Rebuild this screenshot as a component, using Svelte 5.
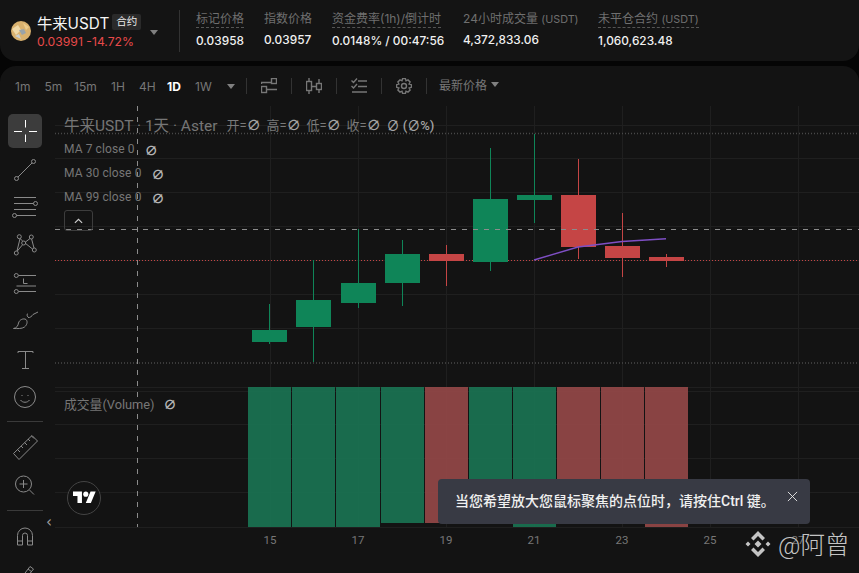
<script>
    const intervals = ['1m', '5m', '15m', '1H', '4H', '1D', '1W']
    const stats = [
        { label: '标记价格', value: '0.03958', dashed: true, left: 0 },
        { label: '指数价格', value: '0.03957', left: 68 },
        { label: '资金费率(1h)/倒计时', value: '0.0148% / 00:47:56', dashed: true, left: 136 },
        { label: '24小时成交量', unit: '(USDT)', value: '4,372,833.06', left: 267 },
        { label: '未平仓合约', unit: '(USDT)', value: '1,060,623.48', dashed: true, left: 402 }
    ]
    const candles = [
        { x: 252, top: 330, bottom: 342, hi: 304, lo: 344, up: true, volEnd: 291, volStart: 248, volBottom: 527 },
        { x: 296, top: 300, bottom: 327, hi: 260, lo: 362, up: true, volStart: 292, volEnd: 335, volBottom: 527 },
        { x: 341, top: 283, bottom: 303, hi: 229, lo: 308, up: true, volStart: 336, volEnd: 380, volBottom: 527 },
        { x: 385, top: 254, bottom: 283, hi: 240, lo: 306, up: true, volStart: 381, volEnd: 424, volBottom: 523 },
        { x: 429, top: 254, bottom: 261, hi: 245, lo: 286, up: false, volStart: 425, volEnd: 468, volBottom: 523 },
        { x: 473, top: 199, bottom: 262, hi: 148, lo: 271, up: true, volStart: 469, volEnd: 512, volBottom: 520 },
        { x: 517, top: 195, bottom: 200, hi: 134, lo: 223, up: true, volStart: 513, volEnd: 556, volBottom: 527 },
        { x: 561, top: 195, bottom: 247, hi: 159, lo: 259, up: false, volStart: 557, volEnd: 600, volBottom: 520 },
        { x: 605, top: 246, bottom: 258, hi: 213, lo: 277, up: false, volStart: 601, volEnd: 644, volBottom: 520 },
        { x: 649, top: 257, bottom: 261, hi: 254, lo: 267, up: false, volStart: 645, volEnd: 688, volBottom: 527 }
    ]
    const gridX = [270, 358, 446, 534, 622, 710, 798]
    const gridY = [125, 158, 192, 226, 260, 294, 328, 387, 391, 424, 458, 492, 527]
    const days = ['15', '17', '19', '21', '23', '25', '27']
    const ohlc = ['开', '高', '低', '收']
    const maRows = [
        { name: 'MA 7 close 0' },
        { name: 'MA 30 close 0' },
        { name: 'MA 99 close 0' }
    ]
    const tbIcons = ['line', 'lines', 'pattern', 'fib', 'brush', 'text', 'smile']
</script>

<div class="page">
    <header class="topbar">
        <div class="symbol">
            <svg class="coin" viewBox="0 0 20 20">
                <circle cx="10" cy="10" r="10" fill="#d9b16e" />
                <path d="M1 8 L7 4 L10 9 L5 14 Z" fill="#f0d9a8" />
                <path d="M8 9 L13 8 L15 12 L11 14 Z" fill="#9aa3a8" />
                <path d="M12 2 L18 6 L15 9 Z" fill="#eccb8c" />
                <path d="M4 15 L8 13 L10 18 Z" fill="#c9d0d4" />
            </svg>
            <div class="symbol-text">
                <div class="name-row">
                    <span class="name">牛来USDT</span>
                    <span class="badge">合约</span>
                </div>
                <div class="last"><span>0.03991</span> <span>-14.72%</span></div>
            </div>
            <span class="caret sym-caret"></span>
        </div>
        <div class="vline"></div>
        <div class="stats">
            {#each stats as s}
                <div class="stat" style="left: {s.left}px">
                    <span class="stat-label" class:dashed={s.dashed}>{s.label}{#if s.unit}&nbsp;<small>{s.unit}</small>{/if}</span>
                    <span class="stat-value">{s.value}</span>
                </div>
            {/each}
        </div>
    </header>

    <section class="panel">
        <div class="toolbar">
            <div class="intervals">
                {#each intervals as iv}
                    <span class="iv" class:on={iv === '1D'}>{iv}</span>
                {/each}
                <span class="caret iv-caret"></span>
            </div>
            <div class="tb-sep"></div>
            <button class="tb-btn" aria-label="indicators">
                <svg viewBox="0 0 16 16" width="16" height="16">
                    <rect x="10.5" y="0.5" width="5" height="5" />
                    <rect x="0.5" y="8.5" width="5" height="6" />
                    <path d="M0 4.5H10M5.5 11.5H16M0.5 4.5V6" />
                </svg>
            </button>
            <div class="tb-sep"></div>
            <button class="tb-btn" aria-label="candles">
                <svg viewBox="0 0 16 16" width="16" height="16">
                    <rect x="0.5" y="3.5" width="5" height="9" />
                    <rect x="10.5" y="5.5" width="5" height="6" />
                    <path d="M3 0V3M3 13V16M13 1V5M13 12V15M6 8.5H10" />
                </svg>
            </button>
            <div class="tb-sep"></div>
            <button class="tb-btn" aria-label="list">
                <svg viewBox="0 0 16 16" width="16" height="16">
                    <path d="M7 3H16M7 8.5H16M1 14H16M0.5 2.5L2.5 4.5L6 0.5M0.5 8L2.5 10L6 6" />
                </svg>
            </button>
            <div class="tb-sep"></div>
            <button class="tb-btn" aria-label="settings">
                <svg viewBox="0 0 16 16" width="16" height="16">
                    <path d="M6.6 0.6H9.4L10 2.8L12 1.9L14.1 4L13.1 6L15.4 6.7V9.3L13.1 10L14.1 12L12 14.1L10 13.2L9.4 15.4H6.6L6 13.2L4 14.1L1.9 12L2.9 10L0.6 9.3V6.7L2.9 6L1.9 4L4 1.9L6 2.8Z" />
                    <circle cx="8" cy="8" r="2.5" />
                </svg>
            </button>
            <div class="tb-sep"></div>
            <div class="price-type">最新价格 <span class="caret pt-caret"></span></div>
        </div>

        <div class="workspace">
            <aside class="tools">
                <button class="tool active" aria-label="cross">
                    <svg viewBox="0 0 34 34"><path d="M6 17.5H14M21 17.5H29M17.5 6V13.5M17.5 20.5V28" /></svg>
                </button>
                {#each tbIcons as ic}
                    <button class="tool" aria-label={ic}>
                        <svg viewBox="0 0 34 34">
                            {#if ic === 'line'}
                                <circle cx="8.5" cy="26.5" r="2" /><circle cx="25.5" cy="9.5" r="2" /><path d="M10 25L24 11" />
                            {:else if ic === 'lines'}
                                <path d="M6 7.5H28M6 13.5H25.5M6 19.5H28M8.5 25.5H28" /><circle cx="27.5" cy="13.5" r="2" /><circle cx="6.5" cy="25.5" r="2" />
                            {:else if ic === 'pattern'}
                                <circle cx="11.3" cy="8.7" r="2" /><circle cx="23.3" cy="9" r="2" /><circle cx="15.7" cy="15" r="2" /><circle cx="8.3" cy="25" r="2" /><circle cx="26.3" cy="22" r="2" />
                                <path d="M12 10.5L14.8 13.2M22 10.5L17.5 14M9.2 23.2L14.6 16.7M17.6 15.5L24.5 21M12 10.7L9 23M23.6 11L26 20" />
                            {:else if ic === 'fib'}
                                <circle cx="8.3" cy="9.5" r="2" /><circle cx="8.3" cy="25.5" r="2" />
                                <path d="M10.5 9.5H28M8.5 20H28M10.5 25.5H28M15.5 12.5V17.5H19.5" />
                            {:else if ic === 'brush'}
                                <path d="M5.5 24.5C9 24 10 21.5 10.5 19C11.5 15.5 15.5 14 18 15.5C20 17.5 19 21 16.5 23C14 25 9 24.5 5.5 24.5ZM20 13C18.5 11.5 19 10 20 9.5M20 13.5C22 14 24 12 25 10.5L30 8" />
                            {:else if ic === 'text'}
                                <path d="M10 9.5H25M10 9.5V11M25 9.5V11M17.5 9.5V26.5M14 26.5H21" />
                            {:else}
                                <circle cx="17" cy="17" r="10.5" /><path d="M12.5 20C14.5 23 19.5 23 21.5 20M14 15V16M20 15V16" />
                            {/if}
                        </svg>
                    </button>
                {/each}
                <div class="tools-sep first"></div>
                <button class="tool" aria-label="ruler">
                    <svg viewBox="0 0 34 34">
                        <path d="M5.5 23.5L24 5.5L29.5 11L11 29.5ZM9.5 19.5L12 22M13 16L15 18M16.5 12.5L19 15M20 9L22 11M23.5 6L26 8.5" />
                    </svg>
                </button>
                <button class="tool" aria-label="zoom">
                    <svg viewBox="0 0 34 34">
                        <circle cx="15.5" cy="16" r="8" /><path d="M21.5 22L26 26.5M11.5 16H19.5M15.5 12V20" />
                    </svg>
                </button>
                <div class="tools-sep"></div>
                <button class="tool" aria-label="magnet">
                    <svg viewBox="0 0 34 34">
                        <path d="M9.5 26V16.5A7.5 7.5 0 0 1 24.5 16.5V26H19.5V16.5A2.5 2.5 0 0 0 14.5 16.5V26ZM9.5 22H14.5M19.5 22H24.5" />
                    </svg>
                </button>
                <button class="tool" aria-label="pencil">
                    <svg viewBox="0 0 34 34">
                        <path d="M8 28L22 9.5L25.5 12L12 29ZM20 12L24 15" />
                    </svg>
                </button>
            </aside>

            <div class="canvas">
                <svg class="chart" viewBox="55 106 804 467" width="804" height="467">
                    {#each gridX as x}
                        <path class="grid" d="M{x + 0.5} 106V527" />
                    {/each}
                    {#each gridY as y}
                        <path class="grid" d="M55 {y + 0.5}H859" />
                    {/each}

                    {#each candles as c}
                        <rect
                            x={c.volStart}
                            y="387"
                            width={c.volEnd - c.volStart}
                            height={c.volBottom - 387}
                            fill={c.up ? '#1a7352' : '#944848'}
                            opacity="0.92" />
                    {/each}

                    <path class="dots gray" d="M55 133.5H859M55 363H859" />
                    <path class="dots red" d="M55 260.5H859" />

                    {#each candles as c}
                        <rect x={c.x + 17} y={c.hi} width="1" height={c.lo - c.hi} fill={c.up ? '#0f8558' : '#c54545'} />
                        <rect x={c.x} y={c.top} width="35" height={c.bottom - c.top} fill={c.up ? '#0f8558' : '#c54545'} />
                    {/each}

                    <polyline class="ma" points="534,260 578,247 622,241.5 666,238.8" />
                    <path class="cross" d="M55 229.5H859M137.5 106V527" />
                </svg>

                <div class="legend">
                    <div class="legend-title">
                        <span class="sym">牛来USDT · 1天 · Aster</span>
                        {#each ohlc as o}
                            <span class="ohlc">{o}=<b>∅</b></span>
                        {/each}
                        <span class="ohlc change"><b>∅ (∅%)</b></span>
                    </div>
                    {#each maRows as m}
                        <div class="ma-row"><span>{m.name}</span><b>∅</b></div>
                    {/each}
                    <button class="collapse" aria-label="collapse">
                        <svg viewBox="0 0 10 6" width="9" height="6"><path d="M1 5L5 1.2L9 5" /></svg>
                    </button>
                </div>

                <div class="vol-label"><span>成交量(Volume)</span><b>∅</b></div>

                <div class="tv-logo">
                    <svg viewBox="0 0 36 28" width="23" height="18">
                        <path d="M14 22H7V11H0V4H14ZM28 22H20L27.5 4H35.5Z" />
                        <circle cx="20" cy="8" r="4" />
                    </svg>
                </div>

                <span class="tools-toggle">‹</span>

                <div class="days">
                    {#each days as d}
                        <span>{d}</span>
                    {/each}
                </div>

                <div class="toast">
                    <span class="toast-text">当您希望放大您鼠标聚焦的点位时，请按住Ctrl 键。</span>
                    <svg viewBox="0 0 12 12" width="11" height="11"><path d="M1 1L11 11M11 1L1 11" /></svg>
                </div>

                <div class="watermark">
                    <svg viewBox="0 0 28 28" width="28" height="28">
                        <path d="M14 1L21 8L18.5 10.5L14 6L9.5 10.5L7 8ZM14 27L21 20L18.5 17.5L14 22L9.5 17.5L7 20ZM14 10.5L17.5 14L14 17.5L10.5 14ZM4 11.5L6.5 14L4 16.5L1.5 14ZM24 11.5L26.5 14L24 16.5L21.5 14Z" />
                    </svg>
                    <span>@阿曾</span>
                </div>
            </div>
        </div>
    </section>
</div>

<style>
    :global(body) {
        margin: 0;
        background: #000;
    }

    .page {
        width: 859px;
        height: 573px;
        overflow: hidden;
        display: flex;
        flex-direction: column;
        gap: 5px;
        font-family: Inter, "Noto Sans CJK SC", sans-serif;
        background: #050505;
    }

    /* top bar */
    .topbar {
        height: 61px;
        flex: none;
        display: flex;
        align-items: center;
        background: #141414;
        border-radius: 0 0 16px 16px;
        padding-left: 11px;
        box-sizing: border-box;
    }

    .symbol {
        display: flex;
        align-items: center;
        width: 168px;
        position: relative;
    }

    .coin {
        width: 20px;
        height: 20px;
        margin-right: 6px;
        flex: none;
    }

    .name-row {
        display: flex;
        align-items: center;
        gap: 3px;
        height: 20px;
    }

    .name {
        color: #f4f4f4;
        font-size: 15.3px;
        font-weight: 400;
    }

    .badge {
        background: #2a2a2a;
        color: #eee;
        font-size: 10.5px;
        border-radius: 2px;
        padding: 0 4px;
        line-height: 16px;
    }

    .last {
        color: #e84a4a;
        font-size: 12.2px;
        line-height: 16px;
        margin-top: 2px;
        white-space: nowrap;
    }

    .caret {
        display: inline-block;
        border-left: 4.5px solid transparent;
        border-right: 4.5px solid transparent;
        border-top: 5px solid #808080;
    }

    .sym-caret {
        position: absolute;
        left: 139px;
        top: 18px;
    }

    .vline {
        width: 1px;
        height: 42px;
        background: #333;
        flex: none;
    }

    .stats {
        position: relative;
        margin-left: 16px;
        height: 42px;
        flex: 1;
    }

    .stat {
        position: absolute;
        top: 1px;
        display: flex;
        flex-direction: column;
        align-items: flex-start;
        white-space: nowrap;
    }

    .stat-label {
        color: #6f6f6f;
        font-size: 12px;
        line-height: 15px;
        height: 16px;
    }

    .stat-label small {
        font-size: 10.8px;
    }

    .stat-label.dashed {
        border-bottom: 1px dashed #555;
    }

    .stat-value {
        color: #f0f0f0;
        font-size: 11.85px;
        font-weight: 500;
        line-height: 15px;
        margin-top: 6px;
    }

    /* chart panel */
    .panel {
        flex: 1;
        display: flex;
        flex-direction: column;
        background: #131313;
        border-radius: 16px 16px 0 0;
        min-height: 0;
    }

    .toolbar {
        height: 40px;
        flex: none;
        display: flex;
        align-items: center;
        padding-left: 15px;
        color: #777;
        font-size: 12px;
    }

    .intervals {
        width: 231px;
        display: flex;
        align-items: center;
        position: relative;
        height: 100%;
    }

    .iv {
        position: relative;
        width: 29.5px;
        flex: none;
        font-size: 12px;
    }

    .iv:nth-child(3) {
        width: 37px;
    }

    .iv:nth-child(4),
    .iv:nth-child(5),
    .iv:nth-child(6) {
        width: 28px;
    }

    .iv.on {
        color: #fff;
        font-weight: 700;
    }

    .iv-caret {
        margin-left: 2px;
    }

    .tb-sep {
        width: 1px;
        height: 16px;
        background: #333;
        flex: none;
    }

    .tb-btn {
        width: 44px;
        height: 28px;
        background: none;
        border: 0;
        padding: 0;
        display: flex;
        align-items: center;
        justify-content: center;
    }

    .tb-btn svg {
        fill: none;
        stroke: #777;
        stroke-width: 1.4;
    }

    .price-type {
        margin: 0 0 3px 12px;
        font-size: 12px;
        display: flex;
        align-items: center;
        gap: 4px;
    }

    .workspace {
        flex: 1;
        display: flex;
        min-height: 0;
    }

    /* left drawing tools */
    .tools {
        width: 55px;
        flex: none;
        display: flex;
        flex-direction: column;
        align-items: center;
        padding: 6px 5px 0 0;
        box-sizing: border-box;
    }

    .tool {
        width: 34px;
        height: 38px;
        flex: none;
        background: none;
        border: 0;
        padding: 0;
        border-radius: 5px;
        display: flex;
        align-items: center;
        justify-content: center;
        margin-left: -1px;
    }

    .tool svg {
        width: 34px;
        height: 34px;
        fill: none;
        stroke: #8a8a8a;
        stroke-width: 1;
    }

    .tool.active {
        height: 34px;
        margin: 2px 0 2px -1px;
        background: #3c3c3c;
    }

    .tool.active svg {
        stroke: #fff;
    }

    .tools-sep {
        width: 36px;
        height: 1px;
        margin: 6px 0;
        flex: none;
        background: #3a3a3a;
    }

    .tools-sep.first {
        margin: 5px 0 6px;
    }

    /* chart canvas */
    .canvas {
        flex: 1;
        position: relative;
        min-width: 0;
    }

    .chart {
        position: absolute;
        inset: 0;
        display: block;
    }

    .grid {
        stroke: #1f1f1f;
        stroke-width: 1;
        fill: none;
    }

    .dots {
        fill: none;
    }

    .dots.gray {
        stroke: #484848;
        stroke-width: 1.5;
        stroke-dasharray: 1 2;
    }

    .dots.red {
        stroke: #c54545;
        stroke-width: 1;
        stroke-dasharray: 1 2;
    }

    .cross {
        fill: none;
        stroke: #8c8c8c;
        stroke-width: 1;
        stroke-dasharray: 5 6;
    }

    .ma {
        fill: none;
        stroke: #7e4fc4;
        stroke-width: 1.4;
    }

    .legend {
        position: absolute;
        left: 9px;
        top: 6px;
        font-family: Roboto, "Noto Sans CJK SC", sans-serif;
        color: #767676;
    }

    .legend-title {
        display: flex;
        align-items: center;
        height: 24px;
        margin-bottom: 1px;
        white-space: nowrap;
    }

    .sym {
        font-size: 15.5px;
        margin-right: 9px;
    }

    .ohlc {
        font-size: 13px;
        width: 40px;
        flex: none;
        color: #7a7a7a;
    }

    .ohlc b {
        color: #a4a4a4;
        font-weight: 500;
        font-size: 14px;
    }

    .ohlc.change b {
        font-size: 13px;
    }

    .ma-row {
        height: 24px;
        display: flex;
        align-items: center;
        font-size: 12px;
        white-space: nowrap;
        letter-spacing: 0.1px;
    }

    .ma-row b,
    .vol-label b {
        color: #b4b4b4;
        font-weight: 700;
        font-size: 13px;
        margin-left: 10px;
    }

    .vol-label b {
        margin-left: 8px;
    }

    .collapse {
        margin-top: 1px;
        width: 29px;
        height: 21px;
        display: flex;
        align-items: center;
        justify-content: center;
        background: none;
        border: 1px solid #3d3d3d;
        border-radius: 3px;
        padding: 0;
    }

    .collapse svg {
        fill: none;
        stroke: #cfcfcf;
        stroke-width: 1.3;
    }

    .vol-label {
        position: absolute;
        left: 9px;
        top: 285px;
        height: 24px;
        display: flex;
        align-items: center;
        gap: 1px;
        color: #767676;
        font-family: Roboto, "Noto Sans CJK SC", sans-serif;
        font-size: 12.8px;
    }

    .tv-logo {
        position: absolute;
        left: 12px;
        top: 375px;
        width: 32px;
        height: 32px;
        border: 1px solid #444;
        border-radius: 50%;
        display: flex;
        align-items: center;
        justify-content: center;
        background: #131313;
    }

    .tv-logo svg {
        fill: #fff;
    }

    .tools-toggle {
        position: absolute;
        left: -9px;
        top: 406px;
        color: #a0a0a0;
        font-size: 15px;
        line-height: 20px;
        font-family: "DejaVu Sans", sans-serif;
    }

    .days {
        position: absolute;
        left: 0;
        right: 0;
        top: 426px;
        height: 16px;
        color: #777;
        font-size: 11.5px;
        font-family: Roboto, sans-serif;
        line-height: 16px;
        display: flex;
        padding-left: 171px;
    }

    .days span {
        width: 88px;
        flex: none;
        text-align: center;
    }

    .toast {
        position: absolute;
        left: 383px;
        top: 373px;
        width: 372px;
        height: 45px;
        box-sizing: border-box;
        background: #383a44;
        border-radius: 4px;
        padding: 0 12px 0 17px;
        display: flex;
        align-items: center;
        justify-content: space-between;
        color: #f0f0f0;
        font-size: 14px;
        font-weight: 500;
        font-family: Roboto, "Noto Sans CJK SC", sans-serif;
        white-space: nowrap;
    }

    .toast-text {
        padding-bottom: 3px;
    }

    .toast svg {
        fill: none;
        stroke: #e8e8e8;
        stroke-width: 1;
        margin-top: -11px;
    }

    .watermark {
        position: absolute;
        left: 689px;
        top: 420px;
        display: flex;
        align-items: center;
        gap: 6px;
        color: #d8d8d8;
        opacity: 0.9;
        font-size: 24.5px;
        font-weight: 300;
        font-family: Roboto, "Noto Sans CJK SC", sans-serif;
        white-space: nowrap;
    }

    .watermark svg {
        fill: #d8d8d8;
    }
</style>
